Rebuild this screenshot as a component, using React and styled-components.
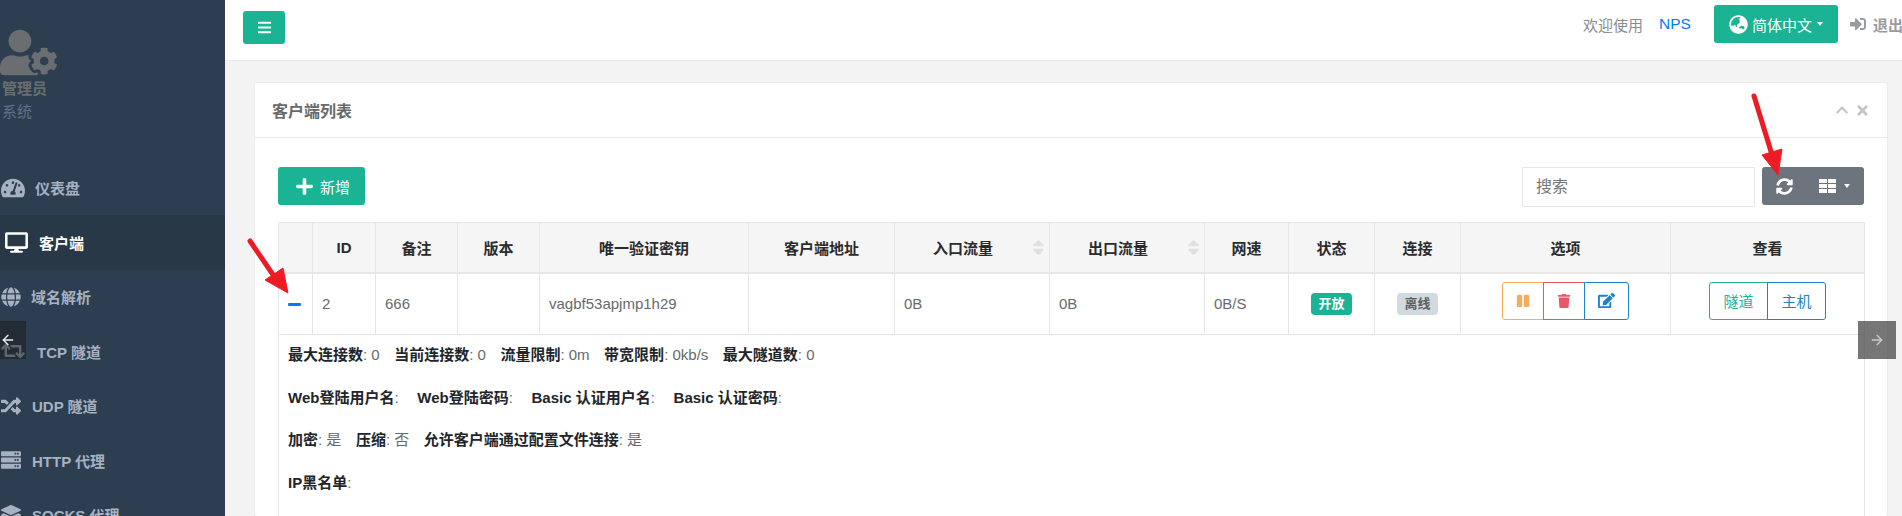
import React from "react";
import styled, { createGlobalStyle } from "styled-components";
import { ArrowLeft, ArrowRight } from "lucide-react";
import {
  FaTachometerAlt,
  FaDesktop,
  FaGlobe,
  FaRetweet,
  FaRandom,
  FaServer,
  FaLayerGroup,
  FaUserCog,
  FaBars,
  FaGlobeAsia,
  FaSignInAlt,
  FaPlus,
  FaSyncAlt,
  FaPause,
  FaTrash,
  FaEdit,
  FaChevronUp,
  FaTimes,
  FaSort,
} from "react-icons/fa";

const GlobalStyle = createGlobalStyle`
  html, body {
    margin: 0;
    height: 516px;
    overflow: hidden;
    background: #f3f3f4;
    font-family: "Liberation Sans", "Noto Sans CJK SC", sans-serif;
    font-size: 15px;
    color: #676a6c;
  }
  * { box-sizing: border-box; }
`;

const menu = [
  { label: "仪表盘", icon: FaTachometerAlt, size: 24, gap: 10 },
  { label: "客户端", icon: FaDesktop, size: 23, gap: 11, active: true },
  { label: "域名解析", icon: FaGlobe, size: 20, gap: 10 },
  { label: "TCP 隧道", icon: FaRetweet, size: 24, gap: 12 },
  { label: "UDP 隧道", icon: FaRandom, size: 20, gap: 11 },
  { label: "HTTP 代理", icon: FaServer, size: 20, gap: 11 },
  { label: "SOCKS 代理", icon: FaLayerGroup, size: 20, gap: 11 },
];

const columns = [
  { title: "", width: 34 },
  { title: "ID", width: 63 },
  { title: "备注", width: 82 },
  { title: "版本", width: 82 },
  { title: "唯一验证密钥", width: 209 },
  { title: "客户端地址", width: 146 },
  { title: "入口流量", width: 155, sort: true },
  { title: "出口流量", width: 155, sort: true },
  { title: "网速", width: 84 },
  { title: "状态", width: 86 },
  { title: "连接", width: 86 },
  { title: "选项", width: 210 },
  { title: "查看", width: 194 },
];

const details = [
  [
    ["最大连接数", "0"],
    ["当前连接数", "0"],
    ["流量限制", "0m"],
    ["带宽限制", "0kb/s"],
    ["最大隧道数", "0"],
  ],
  [
    ["Web登陆用户名", ""],
    ["Web登陆密码", ""],
    ["Basic 认证用户名", ""],
    ["Basic 认证密码", ""],
  ],
  [
    ["加密", "是"],
    ["压缩", "否"],
    ["允许客户端通过配置文件连接", "是"],
  ],
  [["IP黑名单", ""]],
];

// the list icon of the column switch has two equal columns, no package has it
function ColumnsIcon() {
  return (
    <svg width="17" height="14" viewBox="0 0 17 14" fill="currentColor">
      <rect x="0" y="0" width="8" height="4" />
      <rect x="9" y="0" width="8" height="4" />
      <rect x="0" y="5" width="8" height="4" />
      <rect x="9" y="5" width="8" height="4" />
      <rect x="0" y="10" width="8" height="4" />
      <rect x="9" y="10" width="8" height="4" />
    </svg>
  );
}

export default function App() {
  return (
    <>
      <GlobalStyle />
      <Page>
        <Sidebar>
          <Profile>
            <FaUserCog size={57} color="#6b6e70" />
            <ProfileName>管理员</ProfileName>
            <ProfileRole>系统</ProfileRole>
          </Profile>
          {menu.map((item) => (
            <MenuItem key={item.label} $active={item.active} $gap={item.gap}>
              <item.icon size={item.size} />
              {item.label}
            </MenuItem>
          ))}
        </Sidebar>

        <Main>
          <TopBar>
            <MenuButton>
              <FaBars size={15} />
            </MenuButton>
            <TopRight>
              <Welcome>欢迎使用</Welcome>
              <BrandLink>NPS</BrandLink>
              <LangButton>
                <FaGlobeAsia size={19} />
                简体中文
                <Caret />
              </LangButton>
              <Logout>
                <FaSignInAlt size={16} />
                退出
              </Logout>
            </TopRight>
          </TopBar>

          <Content>
            <Card>
              <CardHeader>
                <CardTitle>客户端列表</CardTitle>
                <CardTools>
                  <FaChevronUp size={14} />
                  <FaTimes size={15} />
                </CardTools>
              </CardHeader>
              <CardBody>
                <Toolbar>
                  <AddButton>
                    <FaPlus size={19} />
                    新增
                  </AddButton>
                  <ToolbarRight>
                    <SearchInput placeholder="搜索" />
                    <ToolGroup>
                      <FaSyncAlt size={17} />
                      <ToolColumns>
                        <ColumnsIcon />
                        <Caret />
                      </ToolColumns>
                    </ToolGroup>
                  </ToolbarRight>
                </Toolbar>

                <Table>
                  <colgroup>
                    {columns.map((col, i) => (
                      <col key={i} width={col.width} />
                    ))}
                  </colgroup>
                  <thead>
                    <tr>
                      {columns.map((col, i) => (
                        <Th key={i} $sort={col.sort}>
                          {col.title}
                          {col.sort && (
                            <SortIcon>
                              <FaSort size={19} />
                            </SortIcon>
                          )}
                        </Th>
                      ))}
                    </tr>
                  </thead>
                  <tbody>
                    <tr>
                      <Td>
                        <MinusBar />
                      </Td>
                      <Td>2</Td>
                      <Td>666</Td>
                      <Td />
                      <Td>vagbf53apjmp1h29</Td>
                      <Td />
                      <Td>0B</Td>
                      <Td>0B</Td>
                      <Td>0B/S</Td>
                      <CenterTd>
                        <Badge $bg="#1ab394" $color="#fff">
                          开放
                        </Badge>
                      </CenterTd>
                      <CenterTd>
                        <Badge $bg="#d1dade" $color="#5e5e5e">
                          离线
                        </Badge>
                      </CenterTd>
                      <CenterTd>
                        <ButtonGroup>
                          <OutlineButton $color="#f8ac59" $width={42}>
                            <FaPause size={14} />
                          </OutlineButton>
                          <OutlineButton $color="#ed5565" $width={42}>
                            <FaTrash size={14} />
                          </OutlineButton>
                          <OutlineButton $color="#1c84c6" $width={45}>
                            <FaEdit size={17} />
                          </OutlineButton>
                        </ButtonGroup>
                      </CenterTd>
                      <CenterTd>
                        <ButtonGroup>
                          <OutlineButton $color="#1ab394" $width={59}>
                            隧道
                          </OutlineButton>
                          <OutlineButton $color="#1c84c6" $width={59}>
                            主机
                          </OutlineButton>
                        </ButtonGroup>
                      </CenterTd>
                    </tr>
                    <tr>
                      <DetailCell colSpan={columns.length}>
                        {details.map((line, i) => (
                          <DetailLine key={i}>
                            {line.map(([label, value]) => (
                              <span key={label}>
                                <b>{label}</b>:{"\u00a0"}
                                {value}
                              </span>
                            ))}
                          </DetailLine>
                        ))}
                      </DetailCell>
                    </tr>
                  </tbody>
                </Table>
              </CardBody>
            </Card>
          </Content>
        </Main>

        <SlideLeft>
          <ArrowLeft size={16} />
        </SlideLeft>
        <SlideRight>
          <ArrowRight size={16} />
        </SlideRight>

        <Annotation width="1902" height="516" viewBox="0 0 1902 516">
          <g fill="#ed1c24" stroke="#ed1c24">
            <line x1="1754" y1="96" x2="1773" y2="158" strokeWidth="5" strokeLinecap="round" />
            <polygon points="1762,155 1782,149 1778,175" />
            <line x1="250" y1="241" x2="278" y2="282" strokeWidth="5" strokeLinecap="round" />
            <polygon points="283,268 265,280 288,293" />
          </g>
        </Annotation>
      </Page>
    </>
  );
}

const Page = styled.div`
  display: flex;
  position: relative;
  width: 1902px;
  height: 516px;
  overflow: hidden;
`;

const Sidebar = styled.nav`
  flex: 0 0 225px;
  background: #2c3e50;
  color: #a7b1c2;
`;

const Profile = styled.div`
  display: flex;
  flex-direction: column;
  height: 160.5px;
  padding-top: 24px;
  svg {
    display: block;
  }
`;

const ProfileName = styled.div`
  margin-top: -2px;
  padding-left: 2px;
  font-weight: 700;
  font-size: 15px;
  line-height: 20px;
  color: #6b6e70;
`;

const ProfileRole = styled.div`
  margin-top: 3px;
  padding-left: 2px;
  font-size: 15px;
  line-height: 20px;
  color: #5f7388;
`;

const MenuItem = styled.div`
  display: flex;
  align-items: center;
  gap: ${(p) => p.$gap}px;
  height: 54.5px;
  padding-left: ${(p) => (p.$active ? 5 : 1)}px;
  font-weight: 700;
  font-size: 15px;
  color: ${(p) => (p.$active ? "#fff" : "#a7b1c2")};
  background: ${(p) => (p.$active ? "#293846" : "transparent")};
`;

const Main = styled.div`
  flex: 1;
  min-width: 0;
  display: flex;
  flex-direction: column;
`;

const TopBar = styled.header`
  flex: 0 0 61px;
  display: flex;
  align-items: flex-start;
  justify-content: space-between;
  padding: 11px 0 0 18px;
  background: #fff;
  border-bottom: 1px solid #e7eaec;
`;

const MenuButton = styled.div`
  width: 42px;
  height: 33px;
  display: flex;
  align-items: center;
  justify-content: center;
  color: #fff;
  background: #1ab394;
  border-radius: 3px;
`;

const TopRight = styled.div`
  display: flex;
  align-items: center;
  height: 38px;
  margin-top: -6px;
  margin-right: -28px;
  flex: 0 0 347px;
`;

const Welcome = styled.span`
  font-size: 15px;
  color: #8a8c8e;
`;

const BrandLink = styled.span`
  margin-left: 16px;
  font-size: 15.5px;
  color: #007bff;
`;

const LangButton = styled.div`
  display: flex;
  align-items: center;
  gap: 4px;
  width: 124px;
  height: 38px;
  margin-left: 23px;
  padding-left: 15px;
  font-size: 15px;
  color: #fff;
  background: #1ab394;
  border-radius: 3px;
`;

const Caret = styled.i`
  display: inline-block;
  margin-left: 1px;
  border-top: 4px solid currentColor;
  border-left: 3.5px solid transparent;
  border-right: 3.5px solid transparent;
`;

const Logout = styled.div`
  display: flex;
  align-items: center;
  gap: 7px;
  margin-left: 12px;
  font-weight: 700;
  font-size: 15px;
  white-space: nowrap;
  color: #999c9e;
`;

const Content = styled.main`
  flex: 1;
  padding: 22px 15px 0 30px;
  min-height: 0;
`;

const Card = styled.section`
  height: 100%;
  background: #fff;
  border-radius: 2px;
  box-shadow: 0 0 0 1px #ececec;
`;

const CardHeader = styled.div`
  display: flex;
  align-items: center;
  justify-content: space-between;
  height: 55px;
  padding: 0 17px;
  border-bottom: 1px solid #e7eaec;
`;

const CardTitle = styled.h5`
  margin: 0;
  font-size: 16px;
  font-weight: 700;
  color: #676a6c;
`;

const CardTools = styled.div`
  display: flex;
  align-items: center;
  gap: 6px;
  color: #c4c6c8;
`;

const CardBody = styled.div`
  padding: 29px 23px 0 23px;
`;

const Toolbar = styled.div`
  display: flex;
  justify-content: space-between;
  height: 55px;
`;

const AddButton = styled.div`
  display: flex;
  align-items: center;
  gap: 6px;
  width: 87px;
  height: 38px;
  padding-left: 17px;
  font-size: 15px;
  color: #fff;
  background: #1ab394;
  border-radius: 3px;
`;

const ToolbarRight = styled.div`
  display: flex;
  gap: 7px;
`;

const SearchInput = styled.input`
  width: 233px;
  height: 40px;
  padding: 0 13px;
  font-family: inherit;
  font-size: 16px;
  border: 1px solid #e5e6e7;
  border-radius: 1px;
  outline: none;
  &::placeholder {
    color: #757575;
  }
`;

const ToolGroup = styled.div`
  display: flex;
  align-items: center;
  gap: 26px;
  width: 102px;
  height: 38px;
  padding-left: 14px;
  color: #fff;
  background: #6c757d;
  border-radius: 3px;
`;

const ToolColumns = styled.div`
  display: flex;
  align-items: center;
  gap: 7px;
`;

const Table = styled.table`
  width: 1586px;
  table-layout: fixed;
  border-collapse: collapse;
`;

const Th = styled.th`
  position: relative;
  height: 50px;
  padding: 0 ${(p) => (p.$sort ? "18px" : "0")} 0 0;
  font-size: 15px;
  text-align: center;
  color: #2b2b2b;
  background: #f5f5f6;
  border: 1px solid #e7e7e7;
  border-bottom-width: 2px;
`;

const SortIcon = styled.span`
  position: absolute;
  right: 1px;
  top: 15px;
  color: #e0e0e0;
`;

const Td = styled.td`
  height: 62px;
  padding: 0 9px;
  font-size: 15px;
  color: #676a6c;
  border: 1px solid #e7e7e7;
`;

const CenterTd = styled(Td)`
  padding: 0;
  text-align: center;
`;

const MinusBar = styled.span`
  display: block;
  width: 13px;
  height: 3px;
  margin-top: 1px;
  background: #007bff;
  border-radius: 1px;
`;

const Badge = styled.span`
  display: inline-block;
  padding: 3px 7px;
  font-size: 13px;
  font-weight: 700;
  line-height: 16px;
  color: ${(p) => p.$color};
  background: ${(p) => p.$bg};
  border-radius: 4px;
`;

const ButtonGroup = styled.div`
  display: inline-flex;
  vertical-align: middle;
  margin-top: -6px;
  & > div:first-child {
    border-radius: 3px 0 0 3px;
  }
  & > div:last-child {
    border-radius: 0 3px 3px 0;
  }
  & > div + div {
    margin-left: -1px;
  }
`;

const OutlineButton = styled.div`
  display: flex;
  align-items: center;
  justify-content: center;
  width: ${(p) => p.$width}px;
  height: 38px;
  font-size: 15px;
  color: ${(p) => p.$color};
  background: #fff;
  border: 1px solid ${(p) => p.$color};
`;

const DetailCell = styled.td`
  padding: 9px 9px 0;
  vertical-align: top;
  height: 200px;
  font-size: 15px;
  color: #676a6c;
  border-left: 1px solid #e7e7e7;
  border-right: 1px solid #e7e7e7;
`;

const DetailLine = styled.div`
  display: flex;
  gap: 14.5px;
  height: 21px;
  line-height: 21px;
  margin-bottom: 21.5px;
  b {
    color: #212529;
  }
`;

const SlideArrow = styled.div`
  position: absolute;
  top: 321px;
  width: 38px;
  height: 38px;
  display: flex;
  align-items: center;
`;

const SlideLeft = styled(SlideArrow)`
  left: 0;
  width: 26px;
  color: #f0f0f0;
  background: rgba(25, 25, 25, 0.5);
`;

const SlideRight = styled(SlideArrow)`
  left: 1858px;
  justify-content: center;
  color: #ccc;
  background: rgba(60, 60, 60, 0.7);
`;

const Annotation = styled.svg`
  position: absolute;
  left: 0;
  top: 0;
  pointer-events: none;
`;
